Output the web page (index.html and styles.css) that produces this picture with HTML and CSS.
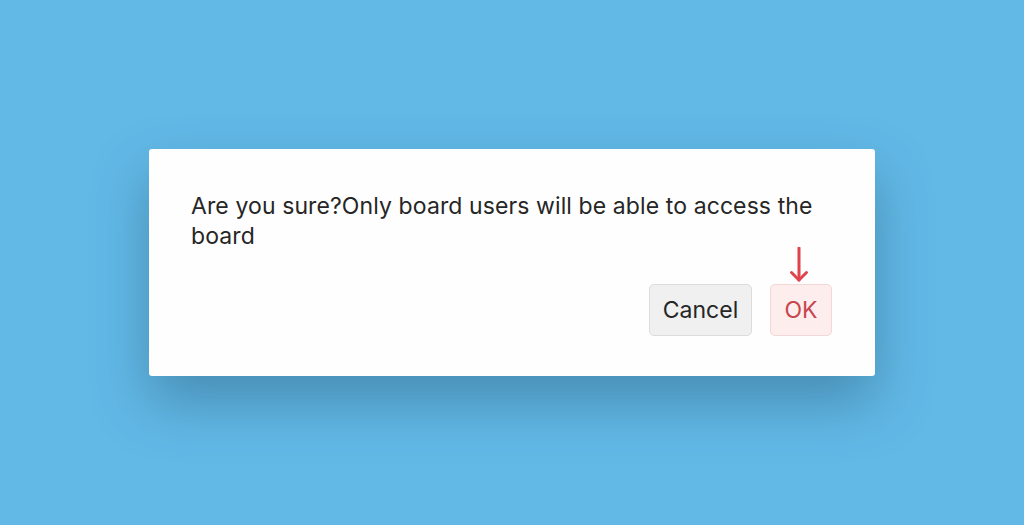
FILE: index.html
```html
<!DOCTYPE html>
<html lang="en">
<head>
  <meta charset="UTF-8" />
  <title>Confirm</title>
  <link rel="stylesheet" href="styles.css">
</head>
<body>
  <div class="dialog">
    <p class="message">Are you sure?Only board users will be able to access the board</p>
    <div class="actions">
      <button class="btn cancel">Cancel</button>
      <button class="btn ok">OK
        <svg class="arrow" width="24" height="36" viewBox="0 0 24 36">
          <path d="M12 1 V33" stroke="#e0434c" stroke-width="3" stroke-linecap="round" fill="none"/>
          <path d="M4.5 25.5 L12 33 L19.5 25.5" stroke="#e0434c" stroke-width="3" stroke-linecap="round" stroke-linejoin="round" fill="none"/>
        </svg>
      </button>
    </div>
  </div>
</body>
</html>
```

FILE: styles.css
```css
* {
  box-sizing: border-box;
}

body {
  margin: 0;
  min-height: 100vh;
  background: #62b9e6;
  display: flex;
  justify-content: center;
  align-items: center;
  font-family: Inter, "Noto Sans", sans-serif;
}

.dialog {
  width: 726px;
  background: #fefefe;
  border-radius: 3px;
  padding: 42px 43px 40px 42px;
  box-shadow: 0 26px 55px rgba(20, 60, 90, 0.35);
}

.message {
  margin: 0;
  font-size: 23px;
  line-height: 30px;
  letter-spacing: 0.1px;
  color: #262626;
}

.actions {
  display: flex;
  justify-content: flex-end;
  gap: 18px;
  margin-top: 33px;
}

.btn {
  position: relative;
  height: 52px;
  padding: 0;
  border-radius: 5px;
  font-family: inherit;
  font-size: 23px;
}

.cancel {
  width: 103px;
  background: #f0f0f0;
  border: 1px solid #dcdcdc;
  color: #262626;
}

.ok {
  width: 62px;
  background: #fdeded;
  border: 1px solid #f3d6d6;
  color: #c8464d;
}

.arrow {
  position: absolute;
  left: 16px;
  top: -38px;
}
```
